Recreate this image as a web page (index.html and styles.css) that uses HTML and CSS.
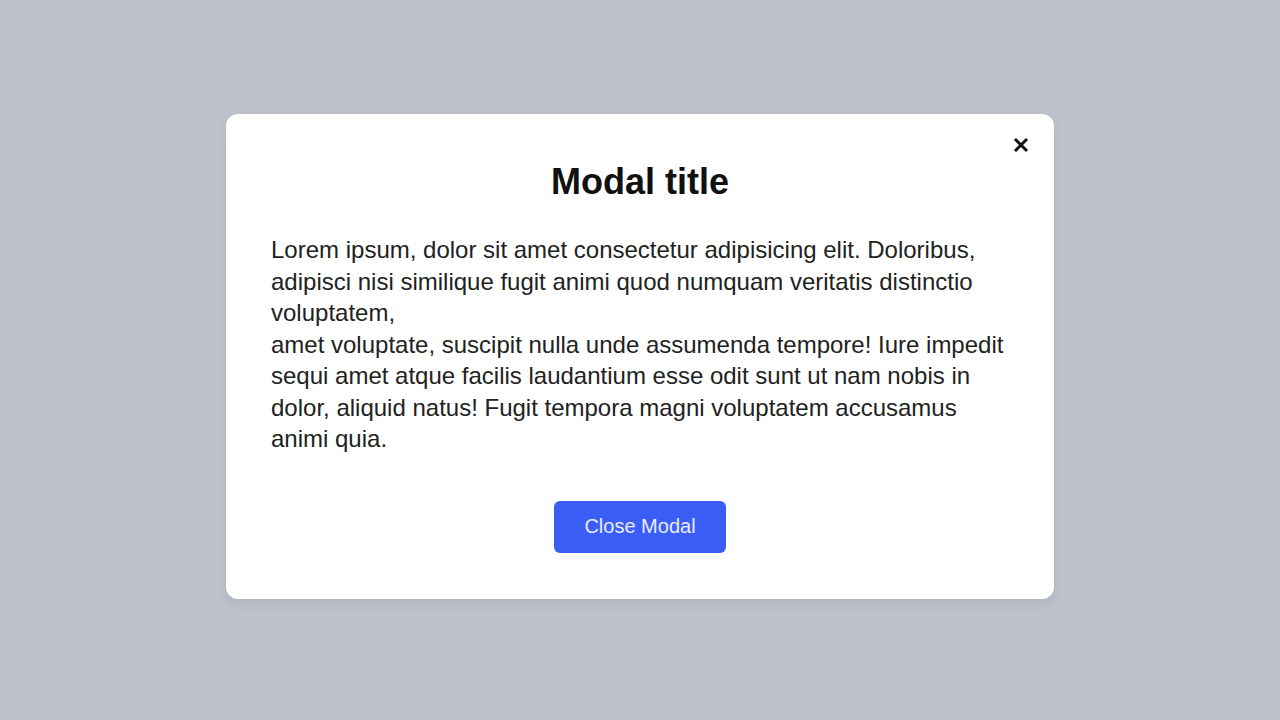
FILE: index.html
```html
<!DOCTYPE html>
<html lang="en">
<head>
<meta charset="utf-8">
<title>Modal</title>
<link rel="stylesheet" href="styles.css">
</head>
<body>
<div class="overlay">
  <div class="modal">
    <button class="close-x" aria-label="Close">
      <svg width="16" height="16" viewBox="0 0 16 16"><path d="M2 2L14 14M14 2L2 14" stroke="#111" stroke-width="3" stroke-linecap="butt"/></svg>
    </button>
    <h2 class="title">Modal title</h2>
    <p class="body">Lorem ipsum, dolor sit amet consectetur adipisicing elit. Doloribus, adipisci nisi similique fugit animi quod numquam veritatis distinctio voluptatem,<br>amet voluptate, suscipit nulla unde assumenda tempore! Iure impedit sequi amet atque facilis laudantium esse odit sunt ut nam nobis in dolor, aliquid natus! Fugit tempora magni voluptatem accusamus animi quia.</p>
    <div class="actions">
      <button class="btn">Close Modal</button>
    </div>
  </div>
</div>
</body>
</html>
```
FILE: styles.css
```css
html, body {
  margin: 0;
  padding: 0;
  height: 100%;
}
body {
  background: #bec2cd;
  font-family: "Liberation Sans", Arial, sans-serif;
}
.overlay {
  height: 100%;
  box-sizing: border-box;
  padding-bottom: 7px;
  display: flex;
  align-items: center;
  justify-content: center;
}
.modal {
  position: relative;
  width: 828px;
  box-sizing: border-box;
  background: #fff;
  border-radius: 12px;
  box-shadow: 0 4px 12px rgba(0, 0, 0, 0.08);
  padding: 46px 45px 46px;
}
.close-x {
  position: absolute;
  top: 23px;
  right: 25px;
  background: none;
  border: 0;
  padding: 0;
  width: 16px;
  height: 16px;
  cursor: pointer;
  display: block;
}
.close-x svg { display: block; }
.title {
  margin: 0;
  text-align: center;
  font-size: 36px;
  font-weight: 700;
  color: #111;
  line-height: 44px;
}
.body {
  margin: 30px 0 0;
  font-size: 24px;
  line-height: 31.5px;
  color: #222;
}
.actions {
  display: flex;
  justify-content: center;
  margin-top: 46px;
}
.btn {
  width: 172px;
  height: 52px;
  border: 0;
  border-radius: 6px;
  background: #3a5ef6;
  color: #e9ecff;
  font-family: "Liberation Sans", Arial, sans-serif;
  font-size: 20px;
  cursor: pointer;
}
```
